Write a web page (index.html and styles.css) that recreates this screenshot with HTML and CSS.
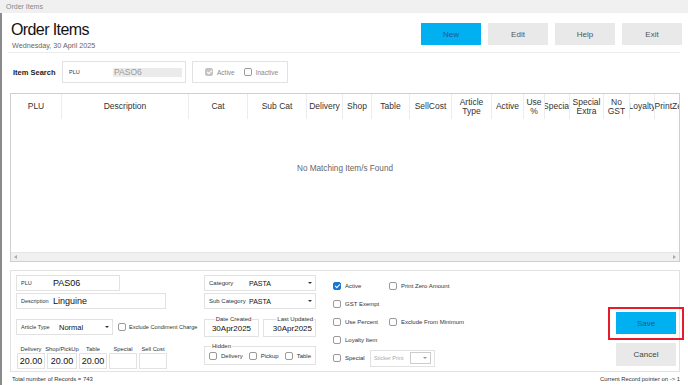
FILE: index.html
```html
<!DOCTYPE html>
<html lang="en">

<head>
    <meta charset="UTF-8">
    <title>Order Items</title>
    <link rel="stylesheet" href="styles.css">
</head>

<body>
    <div class="titlebar">Order Items</div>
    <main class="window">
        <header class="page-header">
            <div class="heading">
                <h1>Order Items</h1>
                <div class="date">Wednesday, 30 April 2025</div>
            </div>
            <div class="actions">
                <button class="btn primary">New</button>
                <button class="btn">Edit</button>
                <button class="btn">Help</button>
                <button class="btn">Exit</button>
            </div>
        </header>

        <div class="search-row">
            <span class="search-label">Item Search</span>
            <div class="search-box">
                <span class="tiny">PLU</span>
                <span class="search-input">PASO6</span>
            </div>
            <div class="status-box">
                <span class="check disabled checked"></span><span class="muted">Active</span>
                <span class="check"></span><span class="muted">Inactive</span>
            </div>
        </div>

        <div class="grid">
            <div class="grid-head">
                <div>PLU</div>
                <div>Description</div>
                <div>Cat</div>
                <div>Sub Cat</div>
                <div>Delivery</div>
                <div>Shop</div>
                <div>Table</div>
                <div>SellCost</div>
                <div>Article<br>Type</div>
                <div>Active</div>
                <div>Use<br>%</div>
                <div>Special</div>
                <div>Special<br>Extra</div>
                <div>No<br>GST</div>
                <div>Loyalty</div>
                <div>PrintZero</div>
            </div>
            <div class="grid-body">No Matching Item/s Found</div>
            <div class="hscroll">
                <span class="arrow left"></span>
                <span class="arrow right"></span>
            </div>
        </div>

        <section class="editor">
            <div class="col-left">
                <div class="field plu">
                    <span class="tiny label">PLU</span>
                    <span class="value">PAS06</span>
                </div>
                <div class="field desc">
                    <span class="tiny label">Description</span>
                    <span class="value">Linguine</span>
                </div>
                <div class="article-row">
                    <div class="field select article">
                        <span class="tiny label">Article Type</span>
                        <span class="value small">Normal</span>
                        <span class="caret"></span>
                    </div>
                    <span class="check"></span><span class="opt">Exclude Condiment Charge</span>
                </div>
                <div class="prices">
                    <div class="price"><span class="tiny">Delivery</span><span class="price-box">20.00</span></div>
                    <div class="price"><span class="tiny">Shop/PickUp</span><span class="price-box">20.00</span></div>
                    <div class="price"><span class="tiny">Table</span><span class="price-box">20.00</span></div>
                    <div class="price"><span class="tiny">Special</span><span class="price-box"></span></div>
                    <div class="price"><span class="tiny">Sell Cost</span><span class="price-box"></span></div>
                </div>
            </div>

            <div class="col-mid">
                <div class="field select cat">
                    <span class="tiny label">Category</span>
                    <span class="value cat-value">PASTA</span>
                    <span class="caret"></span>
                </div>
                <div class="field select cat">
                    <span class="tiny label">Sub Category</span>
                    <span class="value cat-value">PASTA</span>
                    <span class="caret"></span>
                </div>
                <div class="dates">
                    <fieldset class="date-box created">
                        <legend>Date Created</legend>
                        <span>30Apr2025</span>
                    </fieldset>
                    <fieldset class="date-box updated">
                        <legend>Last Updated</legend>
                        <span>30Apr2025</span>
                    </fieldset>
                </div>
                <fieldset class="hidden-box">
                    <legend>Hidden</legend>
                    <span class="check"></span><span class="opt">Delivery</span>
                    <span class="check"></span><span class="opt">Pickup</span>
                    <span class="check"></span><span class="opt">Table</span>
                </fieldset>
            </div>

            <div class="col-flags">
                <div class="flag"><span class="check checked"></span><span class="opt">Active</span></div>
                <div class="flag"><span class="check"></span><span class="opt">Print Zero Amount</span></div>
                <div class="flag"><span class="check"></span><span class="opt">GST Exempt</span></div>
                <div class="flag"></div>
                <div class="flag"><span class="check"></span><span class="opt">Use Percent</span></div>
                <div class="flag"><span class="check"></span><span class="opt">Exclude From Minimum</span></div>
                <div class="flag"><span class="check"></span><span class="opt">Loyalty Item</span></div>
                <div class="flag"></div>
                <div class="flag"><span class="check"></span><span class="opt">Special</span></div>
                <div class="flag">
                    <div class="sticker">
                        <span class="sticker-label">Sticker Print</span>
                        <span class="sticker-select"><span class="caret"></span></span>
                    </div>
                </div>
            </div>

            <div class="col-buttons">
                <div class="highlight">
                    <button class="btn primary save">Save</button>
                </div>
                <button class="btn cancel">Cancel</button>
            </div>
        </section>

        <footer class="statusbar">
            <span>Total number of Records = 743</span>
            <span>Current Record pointer on -&gt; 1</span>
        </footer>
    </main>
</body>

</html>
```

FILE: styles.css
```css
:root {
    --blue: #00b0f0;
    --btn-grey: #e9e9e9;
    --line: #e2e2e2;
    --line-dark: #cfcfcf;
    --text: #222;
    --muted: #777;
}

* {
    box-sizing: border-box;
}

html {
    font-family: "Liberation Sans", Arial, sans-serif;
    color: var(--text);
}

body {
    margin: 0;
    width: 688px;
    height: 385px;
    overflow: hidden;
    background-color: #fff;
}

.titlebar {
    height: 13px;
    line-height: 13px;
    padding-left: 6px;
    font-size: 7px;
    color: #888;
    background-color: #f0f0f0;
}

.window {
    height: 372px;
    border-left: 2px solid #8a8a8a;
    padding: 0 8px;
}

.page-header {
    display: flex;
    justify-content: space-between;
    height: 40px;
    margin-left: -2px;
    padding-left: 2px;
    border-bottom: 1px solid #ececec;
}

.heading h1 {
    margin: 8px 0 0 1px;
    font-size: 16px;
    line-height: 17px;
    font-weight: 400;
    letter-spacing: -0.6px;
    color: #111;
}

.date {
    margin: 3px 0 0 2px;
    font-size: 7.2px;
    color: #666;
}

.actions {
    display: flex;
    gap: 7px;
    margin-top: 10px;
    margin-right: -2px;
}

.btn {
    width: 60px;
    height: 22px;
    border: 0;
    padding: 0;
    font-family: inherit;
    font-size: 8px;
    color: #555;
    background-color: var(--btn-grey);
}

.btn.primary {
    background-color: var(--blue);
    color: #245b86;
}

.search-row {
    display: flex;
    align-items: center;
    height: 22px;
    margin-top: 8px;
}

.search-label {
    width: 52px;
    padding-left: 3px;
    font-size: 7.5px;
    font-weight: 700;
}

.tiny {
    font-size: 5.5px;
    color: #333;
}

.muted {
    font-size: 6.5px;
    color: #888;
    margin-right: 9px;
}

.search-box {
    display: flex;
    align-items: center;
    width: 124px;
    height: 22px;
    padding-left: 6px;
    border: 1px solid var(--line);
}

.search-box .tiny {
    width: 44px;
}

.search-input {
    width: 69px;
    height: 9px;
    line-height: 9px;
    padding-left: 1px;
    font-size: 8.5px;
    color: #999;
    background-color: #ebebeb;
}

.status-box {
    display: flex;
    align-items: center;
    width: 96px;
    height: 22px;
    margin-left: 6px;
    padding-left: 12px;
    border: 1px solid var(--line);
}

.check {
    display: inline-block;
    flex: none;
    width: 8px;
    height: 8px;
    margin-right: 4px;
    border: 1px solid #999;
    border-radius: 2px;
    background-color: #fff;
    position: relative;
}

.check.checked {
    border-color: #1976d2;
    background-color: #1976d2;
}

.check.checked::after {
    content: '';
    position: absolute;
    left: 2px;
    top: 0;
    width: 2px;
    height: 4px;
    border: solid #fff;
    border-width: 0 1px 1px 0;
    transform: rotate(45deg);
}

.check.disabled {
    border-color: #c4c4c4;
    background-color: #c4c4c4;
}

.grid {
    height: 169px;
    margin-top: 10px;
    border: 1px solid var(--line-dark);
    display: flex;
    flex-direction: column;
    overflow: hidden;
}

.grid-head {
    display: grid;
    grid-template-columns: 51px 127px 59px 59px 36px 29px 38px 42px 40px 32px 21px 25px 34px 26px 25px 35px;
    height: 25px;
    flex: none;
}

.grid-head>div {
    display: flex;
    justify-content: center;
    align-items: center;
    overflow: hidden;
    white-space: nowrap;
    text-align: center;
    font-size: 8.5px;
    line-height: 8.5px;
    color: #333;
    border-right: 1px solid #ececec;
}

.grid-body {
    flex: 1;
    display: flex;
    justify-content: center;
    align-items: center;
    padding-bottom: 34px;
    font-size: 8.2px;
    color: #666;
}

.hscroll {
    flex: none;
    display: flex;
    justify-content: space-between;
    align-items: center;
    height: 9px;
    padding: 0 3px;
    background-color: #f0f0f0;
    border-top: 1px solid #e6e6e6;
}

.arrow {
    width: 0;
    height: 0;
    border-top: 2.5px solid transparent;
    border-bottom: 2.5px solid transparent;
}

.arrow.left {
    border-right: 3px solid #aaa;
}

.arrow.right {
    border-left: 3px solid #aaa;
}

.editor {
    display: flex;
    height: 102px;
    margin-top: 8px;
    padding: 4px 0 0 5px;
    border: 1px solid var(--line);
}

.field {
    display: flex;
    align-items: center;
    height: 16px;
    border: 1px solid var(--line);
    position: relative;
}

.field .label {
    width: 36px;
    padding-left: 4px;
    flex: none;
}

.field .value {
    font-size: 9px;
    color: #111;
}

.field .value.small {
    font-size: 7.5px;
}

.plu {
    width: 104px;
}

.desc {
    width: 150px;
    margin-top: 2px;
}

.article-row {
    display: flex;
    align-items: center;
    margin-top: 10px;
}

.article {
    flex: none;
    width: 97px;
    margin-right: 5px;
}

.article .label {
    width: 42px;
}

.article-row .check {
    margin-right: 3px;
}

.article-row .opt {
    font-size: 5.6px;
}

.caret {
    position: absolute;
    right: 3px;
    top: 50%;
    margin-top: -1px;
    width: 0;
    height: 0;
    border-left: 2px solid transparent;
    border-right: 2px solid transparent;
    border-top: 2.5px solid #333;
}

.opt {
    font-size: 6px;
    color: #333;
    margin-right: 8px;
    white-space: nowrap;
}

.prices {
    display: flex;
    gap: 2px;
    margin-top: 11px;
    margin-left: 1px;
}

.price {
    display: flex;
    flex-direction: column;
    align-items: center;
    width: 28px;
}

.price:nth-child(2) {
    width: 30px;
}

.price .tiny {
    font-size: 5.8px;
    white-space: nowrap;
    margin-bottom: 1px;
}

.price-box {
    width: 100%;
    height: 16px;
    line-height: 14px;
    border: 1px solid var(--line);
    text-align: center;
    font-size: 9px;
    color: #111;
}

.col-left {
    width: 188px;
    flex: none;
}

.col-mid {
    width: 112px;
    flex: none;
}

.cat {
    width: 112px;
    margin-bottom: 2px;
}

.cat .label {
    width: 44px;
    font-size: 6px;
}

.cat-value.value {
    font-size: 7px;
}

.dates {
    display: flex;
    justify-content: space-between;
    margin-top: 7px;
}

fieldset {
    margin: 0;
    padding: 0;
    border: 1px solid var(--line);
    min-width: 0;
}

legend {
    padding: 0 1px;
    margin-left: 2px;
    font-size: 6px;
    line-height: 6px;
    color: #333;
}

.date-box {
    height: 21px;
    text-align: center;
    font-size: 8px;
    line-height: 13px;
    color: #111;
}

.created {
    width: 55px;
}

.updated {
    width: 53px;
    text-align: right;
    padding-right: 3px;
}

.hidden-box {
    display: flex;
    align-items: center;
    height: 22px;
    margin-top: 6px;
    padding: 0 0 2px 4px;
}

.hidden-box .opt {
    margin-right: 6px;
}

.col-flags {
    display: grid;
    grid-template-columns: 56px 110px;
    grid-auto-rows: 18px;
    margin-left: 17px;
    margin-top: 2px;
}

.flag {
    display: flex;
    align-items: center;
}

.sticker {
    display: flex;
    align-items: center;
    justify-content: space-between;
    width: 65px;
    height: 17px;
    margin-left: -19px;
    padding: 0 3px 0 3px;
    border: 1px solid var(--line);
}

.sticker-label {
    font-size: 5.5px;
    color: #aaa;
}

.sticker-select {
    position: relative;
    width: 21px;
    height: 12px;
    border: 1px solid #ccc;
    background-color: #fff;
}

.sticker-select .caret {
    border-top-color: #999;
}

.col-buttons {
    margin-left: auto;
    margin-right: -5px;
    display: flex;
    flex-direction: column;
    align-items: center;
    padding-top: 32px;
}

.highlight {
    padding: 3px 6px 4px;
    border: 2px solid #e31e2a;
}

.save {
    display: block;
    color: #d6f1ff;
}

.cancel {
    margin-top: 3px;
    height: 23px;
    color: #444;
}

.statusbar {
    display: flex;
    justify-content: space-between;
    padding: 4px 0 0 2px;
    font-size: 5.9px;
    color: #333;
}
```
